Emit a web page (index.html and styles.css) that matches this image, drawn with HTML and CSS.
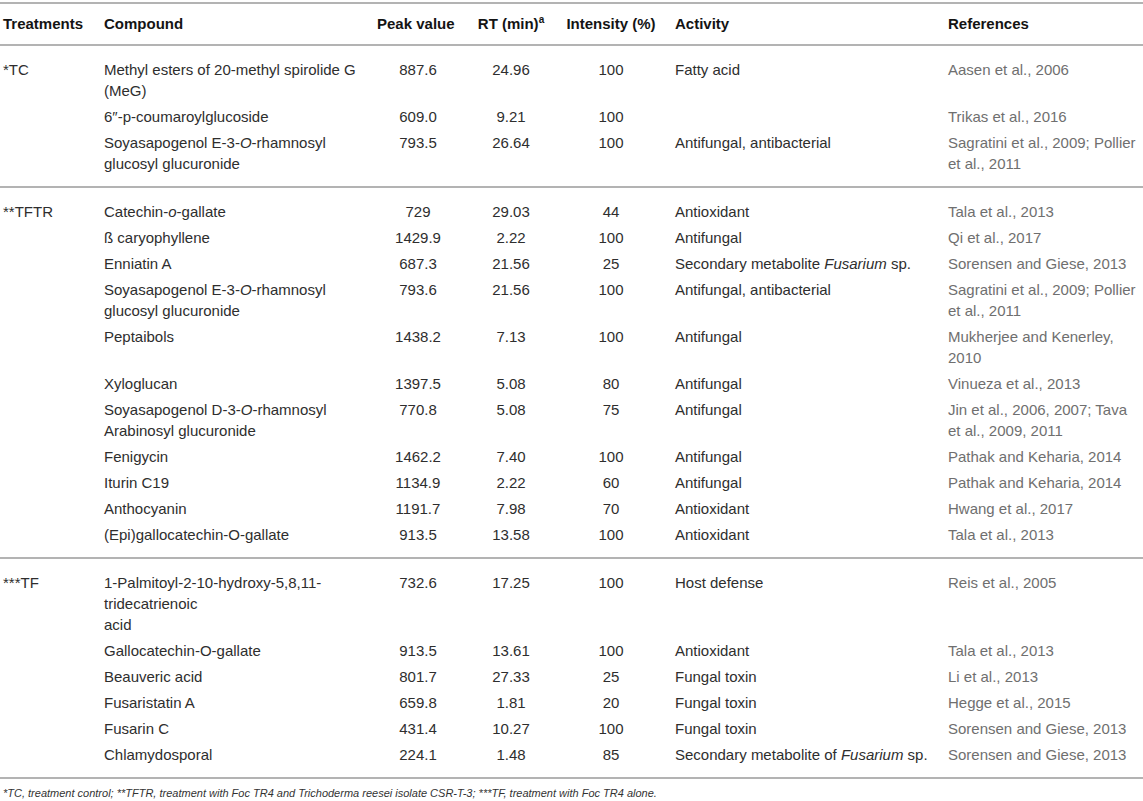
FILE: index.html
```html
<!DOCTYPE html>
<html lang="en">
<head>
<meta charset="utf-8">
<title>Compounds table</title>
<link rel="stylesheet" href="styles.css">
</head>
<body>
<table class="data">
  <colgroup>
    <col class="c-treat">
    <col class="c-comp">
    <col class="c-peak">
    <col class="c-rt">
    <col class="c-int">
    <col class="c-act">
    <col class="c-ref">
  </colgroup>
  <thead>
    <tr>
      <th class="treat">Treatments</th>
      <th>Compound</th>
      <th class="peak-h">Peak value</th>
      <th class="num">RT (min)<sup>a</sup></th>
      <th class="num">Intensity (%)</th>
      <th class="act">Activity</th>
      <th class="ref-h">References</th>
    </tr>
  </thead>
  <tbody class="group">
    <tr>
      <td class="treat">*TC</td>
      <td>Methyl esters of 20-methyl spirolide G (MeG)</td>
      <td class="num">887.6</td>
      <td class="num">24.96</td>
      <td class="num">100</td>
      <td class="act">Fatty acid</td>
      <td class="ref">Aasen et al., 2006</td>
    </tr>
    <tr>
      <td class="treat"></td>
      <td>6″-p-coumaroylglucoside</td>
      <td class="num">609.0</td>
      <td class="num">9.21</td>
      <td class="num">100</td>
      <td class="act"></td>
      <td class="ref">Trikas et al., 2016</td>
    </tr>
    <tr>
      <td class="treat"></td>
      <td>Soyasapogenol E-3-<i>O</i>-rhamnosyl glucosyl glucuronide</td>
      <td class="num">793.5</td>
      <td class="num">26.64</td>
      <td class="num">100</td>
      <td class="act">Antifungal, antibacterial</td>
      <td class="ref">Sagratini et al., 2009; Pollier et al., 2011</td>
    </tr>
  </tbody>
  <tbody class="group">
    <tr>
      <td class="treat">**TFTR</td>
      <td>Catechin-<i>o</i>-gallate</td>
      <td class="num">729</td>
      <td class="num">29.03</td>
      <td class="num">44</td>
      <td class="act">Antioxidant</td>
      <td class="ref">Tala et al., 2013</td>
    </tr>
    <tr>
      <td class="treat"></td>
      <td>ß caryophyllene</td>
      <td class="num">1429.9</td>
      <td class="num">2.22</td>
      <td class="num">100</td>
      <td class="act">Antifungal</td>
      <td class="ref">Qi et al., 2017</td>
    </tr>
    <tr>
      <td class="treat"></td>
      <td>Enniatin A</td>
      <td class="num">687.3</td>
      <td class="num">21.56</td>
      <td class="num">25</td>
      <td class="act">Secondary metabolite <i>Fusarium</i> sp.</td>
      <td class="ref">Sorensen and Giese, 2013</td>
    </tr>
    <tr>
      <td class="treat"></td>
      <td>Soyasapogenol E-3-<i>O</i>-rhamnosyl glucosyl glucuronide</td>
      <td class="num">793.6</td>
      <td class="num">21.56</td>
      <td class="num">100</td>
      <td class="act">Antifungal, antibacterial</td>
      <td class="ref">Sagratini et al., 2009; Pollier et al., 2011</td>
    </tr>
    <tr>
      <td class="treat"></td>
      <td>Peptaibols</td>
      <td class="num">1438.2</td>
      <td class="num">7.13</td>
      <td class="num">100</td>
      <td class="act">Antifungal</td>
      <td class="ref">Mukherjee and Kenerley, 2010</td>
    </tr>
    <tr>
      <td class="treat"></td>
      <td>Xyloglucan</td>
      <td class="num">1397.5</td>
      <td class="num">5.08</td>
      <td class="num">80</td>
      <td class="act">Antifungal</td>
      <td class="ref">Vinueza et al., 2013</td>
    </tr>
    <tr>
      <td class="treat"></td>
      <td>Soyasapogenol D-3-<i>O</i>-rhamnosyl Arabinosyl glucuronide</td>
      <td class="num">770.8</td>
      <td class="num">5.08</td>
      <td class="num">75</td>
      <td class="act">Antifungal</td>
      <td class="ref">Jin et al., 2006, 2007; Tava et al., 2009, 2011</td>
    </tr>
    <tr>
      <td class="treat"></td>
      <td>Fenigycin</td>
      <td class="num">1462.2</td>
      <td class="num">7.40</td>
      <td class="num">100</td>
      <td class="act">Antifungal</td>
      <td class="ref">Pathak and Keharia, 2014</td>
    </tr>
    <tr>
      <td class="treat"></td>
      <td>Iturin C19</td>
      <td class="num">1134.9</td>
      <td class="num">2.22</td>
      <td class="num">60</td>
      <td class="act">Antifungal</td>
      <td class="ref">Pathak and Keharia, 2014</td>
    </tr>
    <tr>
      <td class="treat"></td>
      <td>Anthocyanin</td>
      <td class="num">1191.7</td>
      <td class="num">7.98</td>
      <td class="num">70</td>
      <td class="act">Antioxidant</td>
      <td class="ref">Hwang et al., 2017</td>
    </tr>
    <tr>
      <td class="treat"></td>
      <td>(Epi)gallocatechin-O-gallate</td>
      <td class="num">913.5</td>
      <td class="num">13.58</td>
      <td class="num">100</td>
      <td class="act">Antioxidant</td>
      <td class="ref">Tala et al., 2013</td>
    </tr>
  </tbody>
  <tbody class="group">
    <tr>
      <td class="treat">***TF</td>
      <td>1-Palmitoyl-2-10-hydroxy-5,8,11-tridecatrienoic<br>acid</td>
      <td class="num">732.6</td>
      <td class="num">17.25</td>
      <td class="num">100</td>
      <td class="act">Host defense</td>
      <td class="ref">Reis et al., 2005</td>
    </tr>
    <tr>
      <td class="treat"></td>
      <td>Gallocatechin-O-gallate</td>
      <td class="num">913.5</td>
      <td class="num">13.61</td>
      <td class="num">100</td>
      <td class="act">Antioxidant</td>
      <td class="ref">Tala et al., 2013</td>
    </tr>
    <tr>
      <td class="treat"></td>
      <td>Beauveric acid</td>
      <td class="num">801.7</td>
      <td class="num">27.33</td>
      <td class="num">25</td>
      <td class="act">Fungal toxin</td>
      <td class="ref">Li et al., 2013</td>
    </tr>
    <tr>
      <td class="treat"></td>
      <td>Fusaristatin A</td>
      <td class="num">659.8</td>
      <td class="num">1.81</td>
      <td class="num">20</td>
      <td class="act">Fungal toxin</td>
      <td class="ref">Hegge et al., 2015</td>
    </tr>
    <tr>
      <td class="treat"></td>
      <td>Fusarin C</td>
      <td class="num">431.4</td>
      <td class="num">10.27</td>
      <td class="num">100</td>
      <td class="act">Fungal toxin</td>
      <td class="ref">Sorensen and Giese, 2013</td>
    </tr>
    <tr>
      <td class="treat"></td>
      <td>Chlamydosporal</td>
      <td class="num">224.1</td>
      <td class="num">1.48</td>
      <td class="num">85</td>
      <td class="act">Secondary metabolite of <i>Fusarium</i> sp.</td>
      <td class="ref">Sorensen and Giese, 2013</td>
    </tr>
  </tbody>
</table>
<p class="footnote">*TC, treatment control; **TFTR, treatment with Foc TR4 and Trichoderma reesei isolate CSR-T-3; ***TF, treatment with Foc TR4 alone.</p>
</body>
</html>
```

FILE: styles.css
```css
html, body {
  margin: 0;
  padding: 0;
  background: #ffffff;
}

body {
  padding-top: 2px;
  font-family: "Liberation Sans", Arial, Helvetica, sans-serif;
  font-size: 15px;
  line-height: 21px;
  color: #2e2e2e;
}

.data {
  width: 1143px;
  table-layout: fixed;
  border-collapse: collapse;
  border-spacing: 0;
}

.c-treat { width: 101px; }
.c-comp  { width: 273px; }
.c-peak  { width: 88px; }
.c-rt    { width: 98px; }
.c-int   { width: 102px; }
.c-act   { width: 283px; }
.c-ref   { width: 198px; }

.data thead {
  border-top: 2px solid #b3b3b3;
  border-bottom: 2px solid #b3b3b3;
}

.data th {
  font-weight: bold;
  color: #141414;
  text-align: left;
  white-space: nowrap;
  padding: 9px 3px 10px 3px;
  vertical-align: top;
}

.data th sup {
  font-size: 10px;
  line-height: 0;
  vertical-align: 6px;
}

.data td {
  padding: 3px 3px 2px 3px;
  vertical-align: top;
}

.group {
  border-bottom: 2px solid #b3b3b3;
}

.group tr:first-child td {
  padding-top: 13px;
}

.group tr:last-child td {
  padding-bottom: 12px;
}

.data .num {
  text-align: center;
}

.data .act {
  padding-left: 13px;
}

.data .ref,
.data .ref-h {
  padding-right: 0;
}

.data .ref {
  color: #6f6f6f;
}

.footnote {
  margin: 0;
  padding: 6px 3px 0 3px;
  font-size: 11px;
  line-height: 16px;
  font-style: italic;
  color: #333333;
}
```
